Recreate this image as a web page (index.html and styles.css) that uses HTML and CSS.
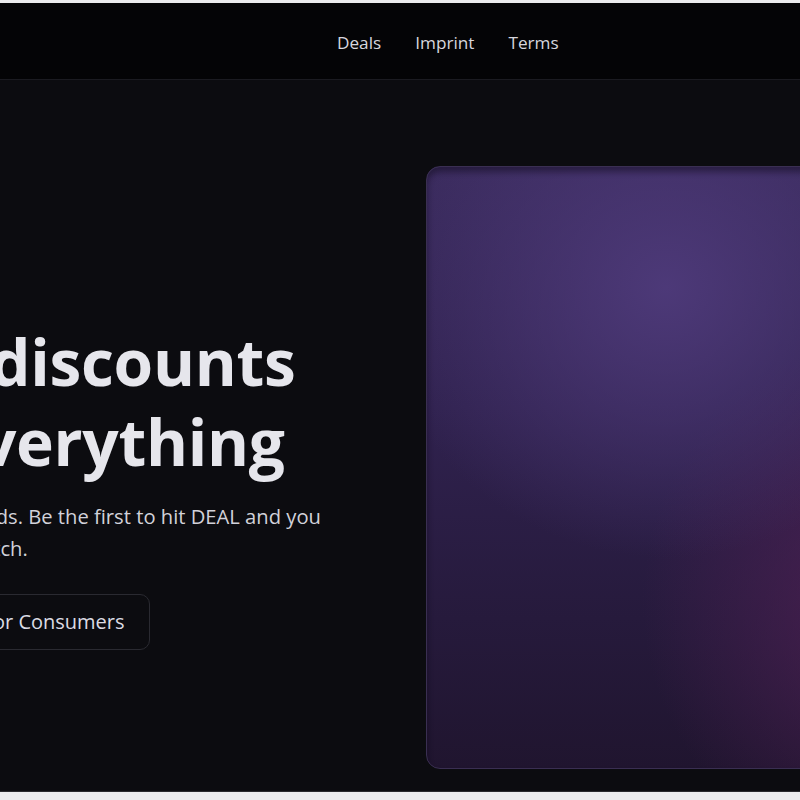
FILE: index.html
```html
<!DOCTYPE html>
<html lang="en">
<head>
<meta charset="utf-8">
<title>Deals</title>
<link rel="stylesheet" href="styles.css">
</head>
<body>
<div class="page">
  <header class="topbar">
    <nav class="nav">
      <a href="#" class="nav-link">Deals</a>
      <a href="#" class="nav-link">Imprint</a>
      <a href="#" class="nav-link">Terms</a>
    </nav>
  </header>
  <main class="hero">
    <div class="hero-text">
      <h1 class="headline">Live discounts<br>on everything</h1>
      <p class="lead">Deals last seconds. Be the first to hit DEAL and you<br>get it fast, no catch.</p>
      <div class="actions">
        <a href="#" class="btn btn-primary">Login</a>
        <a href="#" class="btn btn-outline">For Consumers</a>
      </div>
    </div>
    <div class="visual">
      <div class="visual-glow"></div>
    </div>
  </main>
</div>
</body>
</html>
```

FILE: styles.css
```css
* { box-sizing: border-box; }

html, body {
  margin: 0;
  padding: 0;
  background: #ececee;
}

body {
  font-family: "Open Sans", "Noto Sans", sans-serif;
}

.page {
  margin-top: 3px;
  height: 789px;
  overflow: hidden;
  background: #0c0c10;
  border-bottom: 1px solid #2a2a2e;
}

.topbar {
  height: 77px;
  background: #040406;
  border-bottom: 1px solid #1b1b21;
  display: flex;
  align-items: center;
  padding-left: 337px;
}

.nav {
  display: flex;
  gap: 34px;
  margin-top: 4px;
}

.nav-link {
  color: #d6d6de;
  text-decoration: none;
  font-size: 17.2px;
  line-height: 24px;
}

.hero {
  display: grid;
  grid-template-columns: 541px 480px;
  column-gap: 40px;
  margin-left: -155px;
  padding-top: 86px;
}

.hero-text {
  padding-top: 156px;
}

.headline {
  margin: 0 0 18px;
  font-size: 64px;
  line-height: 80px;
  font-weight: 700;
  color: #e6e6ec;
  letter-spacing: -0.3px;
  white-space: nowrap;
}

.lead {
  margin: 0 0 30px;
  font-size: 20.2px;
  line-height: 32px;
  color: #d2d2da;
  white-space: nowrap;
}

.actions {
  display: flex;
  gap: 12px;
}

.btn {
  display: inline-block;
  font-size: 20px;
  line-height: 30px;
  padding: 12px 24px;
  border-radius: 10px;
  text-decoration: none;
  border: 1px solid transparent;
}

.btn-primary {
  background: #e6e6ec;
  color: #0c0c10;
}

.btn-outline {
  border-color: #2a2a31;
  color: #dcdce4;
}

.visual {
  height: 603px;
  border-radius: 14px;
  border: 1px solid #3a2f52;
  overflow: hidden;
  background:
    radial-gradient(ellipse 60% 45% at 50% 20%, rgba(78, 58, 122, 0.95) 0%, rgba(78, 58, 122, 0) 100%),
    radial-gradient(ellipse 55% 45% at 100% 72%, rgba(80, 32, 84, 0.9) 0%, rgba(80, 32, 84, 0) 100%),
    linear-gradient(180deg, #3a2b5d 0%, #30224f 40%, #261a3c 75%, #20152f 100%);
  box-shadow: inset 0 5px 6px rgba(10, 6, 20, 0.45);
}

.visual-glow {
  width: 100%;
  height: 100%;
}
```
